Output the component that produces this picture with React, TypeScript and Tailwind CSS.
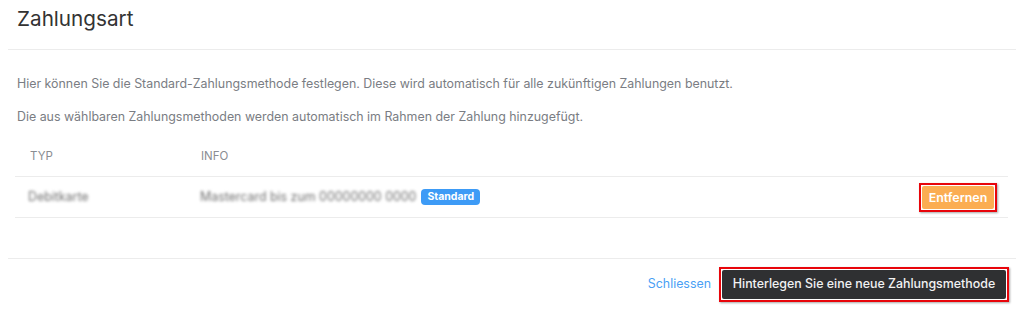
// Zahlungsart dialog: default payment method settings

const font = { fontFamily: 'Inter, "Noto Sans", sans-serif' };

export default function App() {
  return (
    <div className="w-[1024px] h-[310px] bg-white px-2 text-[12.4px] text-[#333]" style={font}>
      {/* Header */}
      <div className="border-b border-[#ececec] pl-[9px] pt-[5px] pb-[16px]">
        <h1 className="text-[20.7px] leading-[28px] text-[#333]">Zahlungsart</h1>
      </div>

      {/* Body */}
      <div className="pt-[24px]">
        <p className="pl-[9px] leading-[20px] text-[#7a7d83]">
          Hier können Sie die Standard-Zahlungsmethode festlegen. Diese wird automatisch für alle zukünftigen Zahlungen benutzt.
        </p>
        <p className="pl-[9px] mt-[13px] leading-[20px] text-[#7a7d83]">
          Die aus wählbaren Zahlungsmethoden werden automatisch im Rahmen der Zahlung hinzugefügt.
        </p>

        <div className="ml-[7px] mr-[8px] mt-[10px] mb-[40px] grid grid-cols-[171px_1fr_auto]">
          <div className="px-[15px] h-[40px] flex items-center text-[11.5px] text-[#8a8d92] border-b border-[#ececec]">TYP</div>
          <div className="px-[15px] h-[40px] flex items-center text-[11.5px] text-[#8a8d92] border-b border-[#ececec]">INFO</div>
          <div className="h-[40px] border-b border-[#ececec]" />

          <div className="px-[13px] h-[41px] flex items-center border-b border-[#ececec]">
            <span className="text-[#707070] blur-[1.4px] select-none">Debitkarte</span>
          </div>
          <div className="px-[14px] h-[41px] flex items-center gap-[5px] border-b border-[#ececec]">
            <span className="text-[#707070] blur-[1.4px] select-none">Mastercard bis zum 00000000 0000</span>
            <span className="inline-flex items-center h-[16px] px-[6px] rounded-[4px] bg-[#3d9bf6] text-white text-[10.5px] font-bold">
              Standard
            </span>
          </div>
          <div className="pr-[11px] h-[41px] flex items-center justify-end border-b border-[#ececec]">
            <span className="border-2 border-[#e8050b] p-[1px] shadow-[1px_1px_2px_rgba(0,0,0,0.35)]">
              <button
                type="button"
                className="block h-[23px] w-[72px] rounded-[2px] bg-[#fbad52] text-white text-[12.4px] font-semibold leading-[23px]"
              >
                Entfernen
              </button>
            </span>
          </div>
        </div>
      </div>

      {/* Footer */}
      <div className="border-t border-[#ececec] h-[52px] flex items-center justify-end gap-[8px] pr-[7px]">
        <button type="button" className="text-[12.4px] text-[#4a9ff5]">Schliessen</button>
        <span className="border-2 border-[#e8050b] p-[1px] shadow-[1px_1px_2px_rgba(0,0,0,0.35)]">
          <button
            type="button"
            className="block h-[29px] w-[284px] rounded-[2px] bg-[#2f3032] text-[#f2f2f2] text-[12.4px] font-medium"
          >
            Hinterlegen Sie eine neue Zahlungsmethode
          </button>
        </span>
      </div>
    </div>
  );
}
